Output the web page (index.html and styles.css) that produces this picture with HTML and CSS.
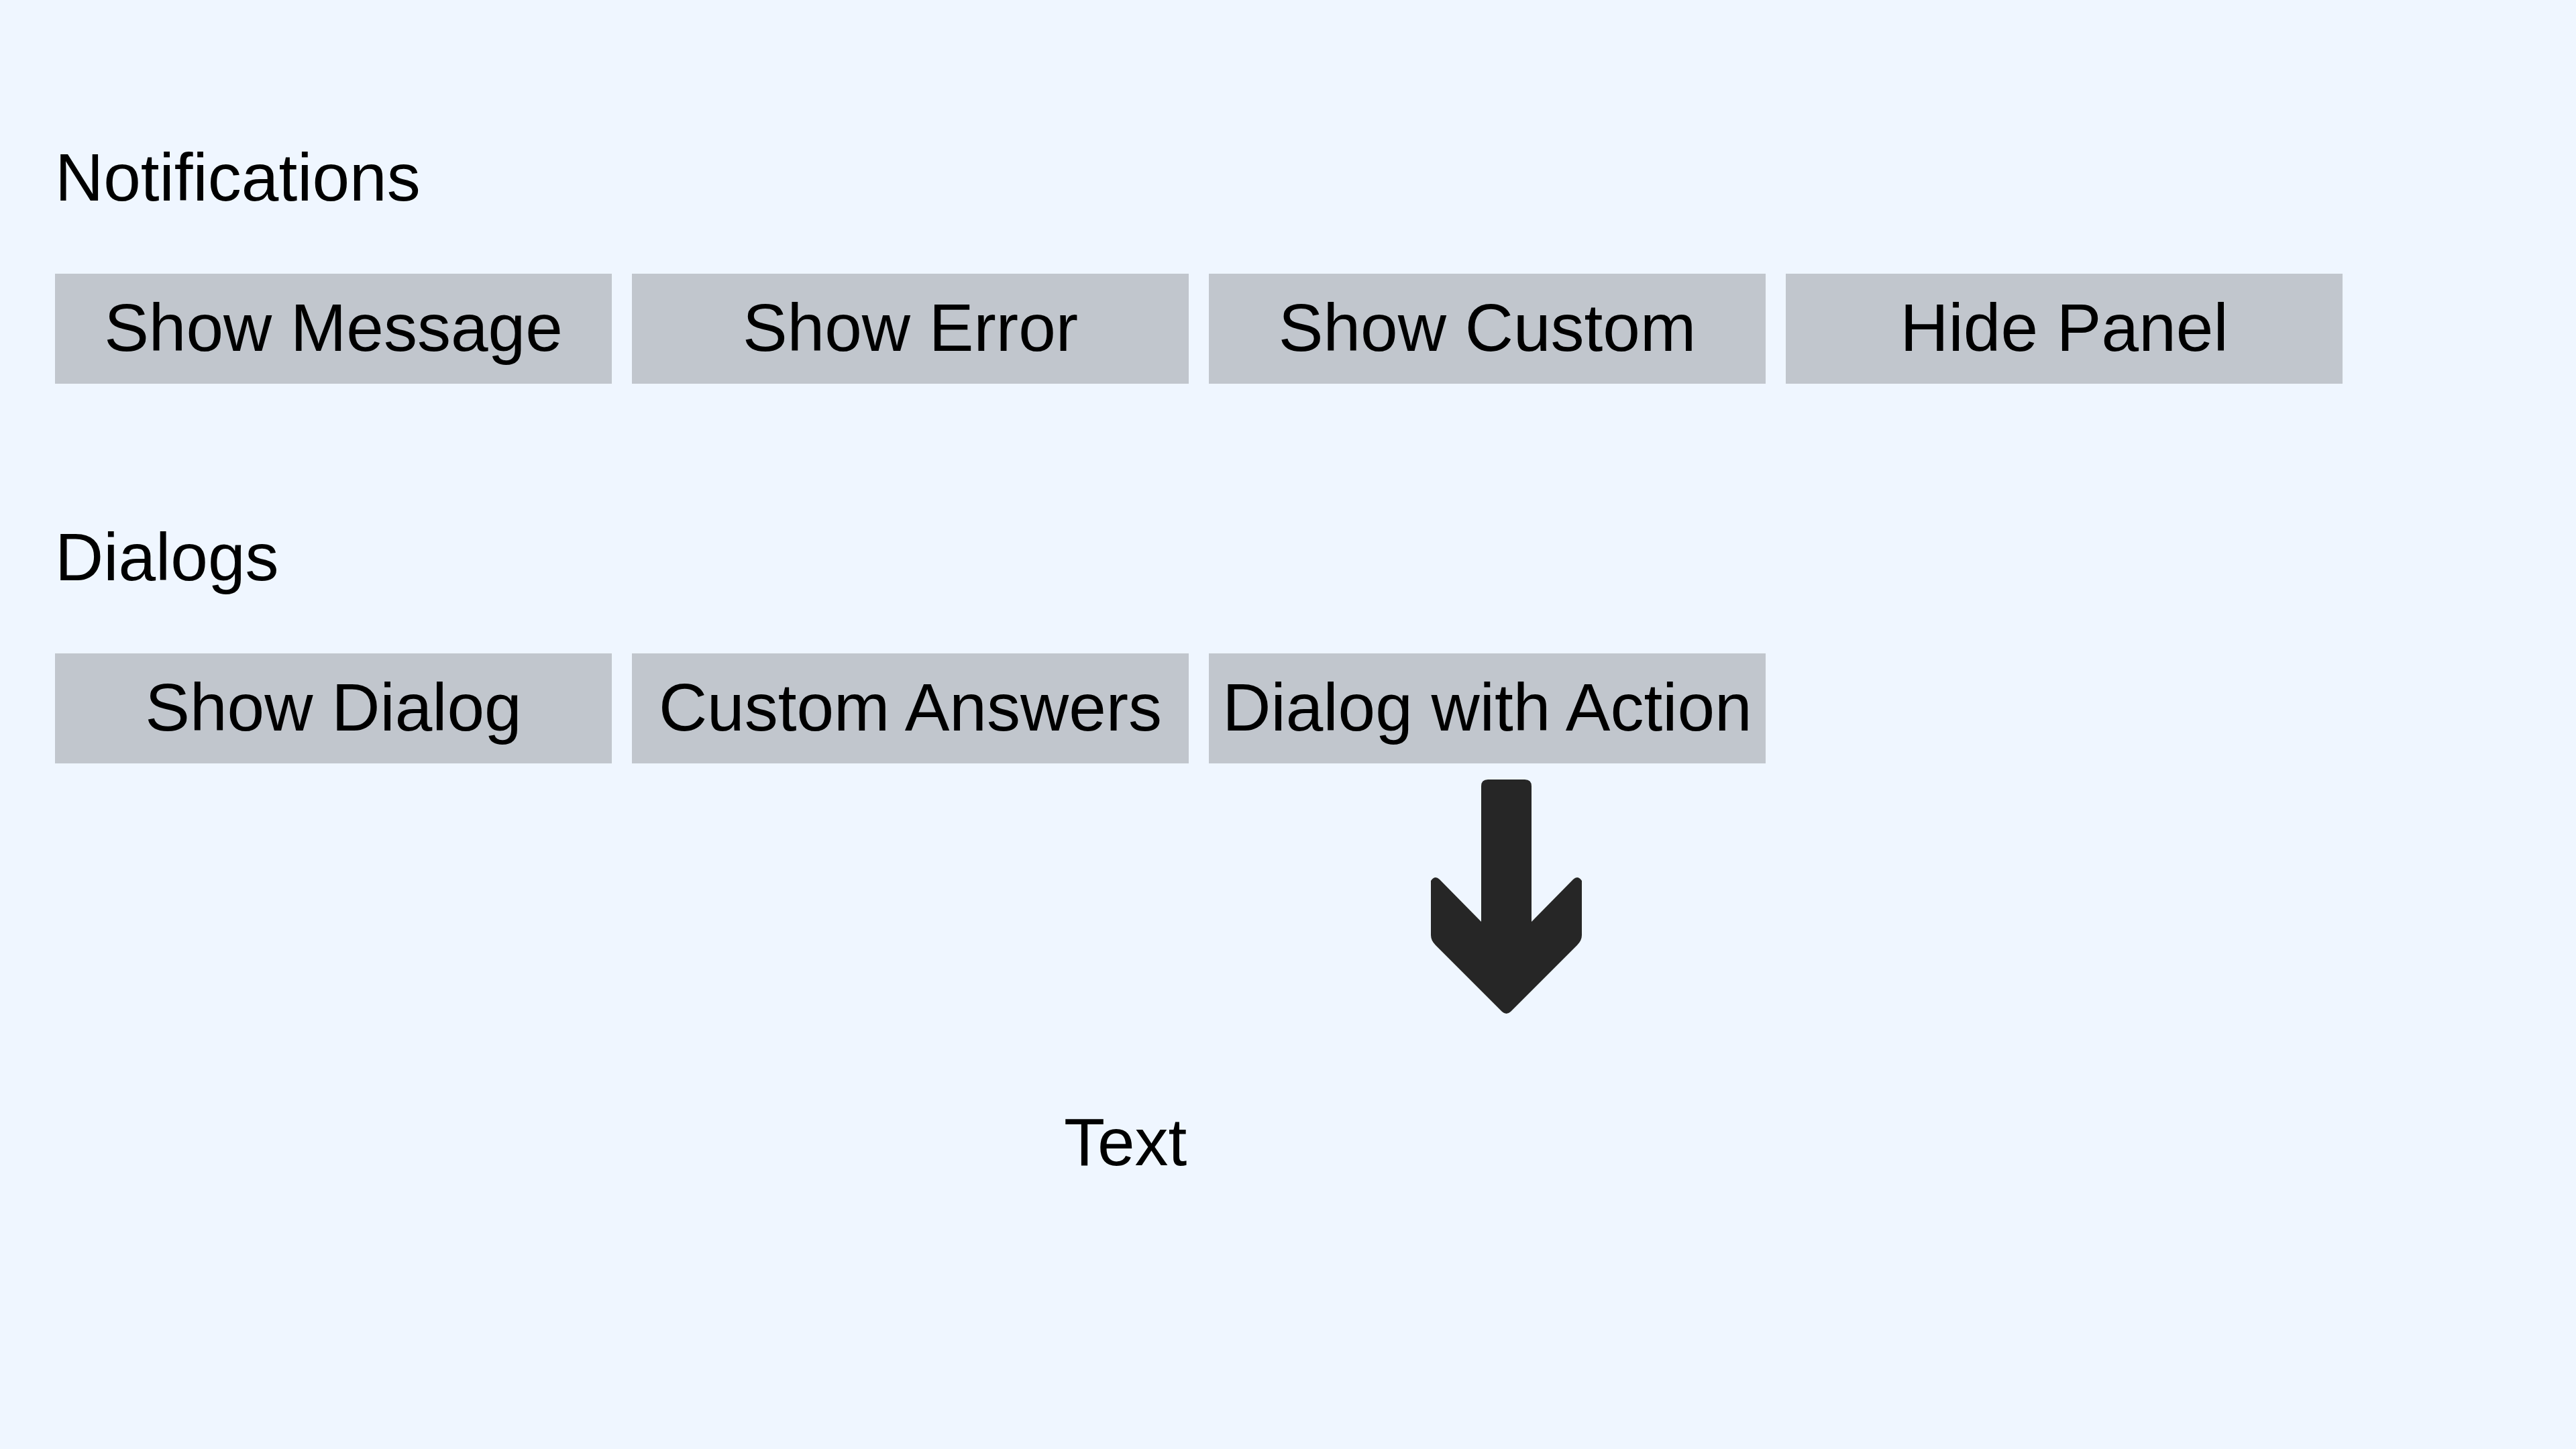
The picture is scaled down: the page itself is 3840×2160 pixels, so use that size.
FILE: index.html
```html
<!DOCTYPE HTML>
<html>
<head>
<title>Notifications and Dialogs</title>
<meta name="viewport" content="width=device-width, initial-scale=1">
<link rel="stylesheet" href="styles.css">
</head>
<body>
<div class="page">
<h2 class="title">Notifications</h2>
<div class="row">
<button class="btn">Show Message</button>
<button class="btn">Show Error</button>
<button class="btn">Show Custom</button>
<button class="btn">Hide Panel</button>
</div>
<h2 class="title dialogs">Dialogs</h2>
<div class="row">
<button class="btn">Show Dialog</button>
<button class="btn">Custom Answers</button>
<button class="btn">Dialog with Action</button>
</div>
<div class="hint">
<svg class="arrow" width="225" height="352" viewBox="0 0 225 352">
<path d="M75,10 Q75,0 85,0 H140 Q150,0 150,10 V212 L212,149 Q219,142 225,151 V232 Q225,240 218,247 L119,346 Q112.5,352 106,346 L7,247 Q0,240 0,232 V151 Q6,142 13,149 L75,212 Z" fill="#262626"/>
</svg>
<div class="label">Text</div>
</div>
</div>
</body>
</html>
```

FILE: styles.css
```css
html,body{
	margin:0;
	padding:0;
	background:#eff6ff;
}
body{
	font-family:"Liberation Sans", Arial, sans-serif;
	color:#000;
}
.page{
	padding:207px 0 0 82px;
	display:flex;
	flex-direction:column;
	align-items:flex-start;
}
.title{
	margin:0 0 86px 0;
	font-size:100px;
	font-weight:normal;
	line-height:115px;
}
.dialogs{
	margin-top:201px;
}
.row{
	display:flex;
	gap:30px;
}
.btn{
	width:830px;
	height:164px;
	padding:0 0 3px 0;
	border:0;
	border-radius:0;
	background:#c1c6cd;
	color:#000;
	font-family:inherit;
	font-size:100px;
	line-height:115px;
	text-align:center;
	white-space:nowrap;
}
.hint{
	display:flex;
	flex-direction:column;
	align-items:flex-start;
}
.arrow{
	display:block;
	margin:24px 0 0 2051px;
}
.label{
	margin:131px 0 0 1504px;
	font-size:100px;
	line-height:115px;
}
```
